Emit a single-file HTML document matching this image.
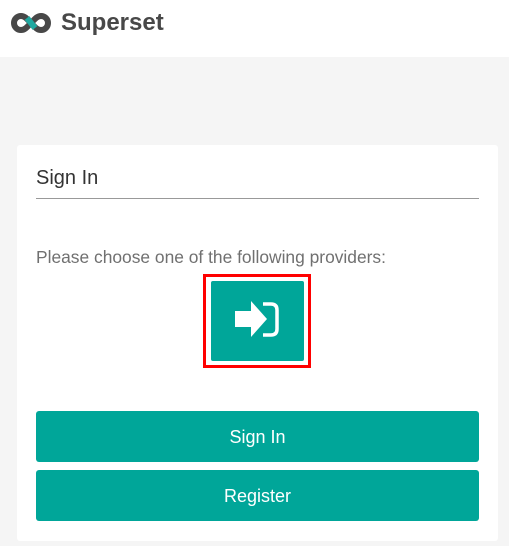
<!DOCTYPE html>
<html><head><style>
body{margin:0;width:509px;height:546px;background:#f5f5f5;font-family:"Liberation Sans",sans-serif;position:relative;overflow:hidden}
.hdr{position:absolute;left:0;top:0;width:509px;height:57px;background:#fff}
.brand{position:absolute;left:61px;top:9px;font-size:24px;font-weight:bold;color:#484848}
.card{position:absolute;left:17px;top:145px;width:481px;height:396px;background:#fff;border-radius:3px}
.t{position:absolute;left:36px;top:167px;font-size:20px;color:#333}
.line{position:absolute;left:36px;top:198px;width:443px;height:1px;background:#999}
.p{position:absolute;left:36px;top:247px;font-size:17.4px;color:#707070}
.red{position:absolute;left:203px;top:274px;width:102px;height:88px;border:3px solid #f00;background:#fff}
.ib{position:absolute;left:5px;top:4px;width:93px;height:80px;background:#00a699;border-radius:2px}
.btn{position:absolute;left:36px;width:443px;height:51px;background:#00a699;border-radius:3px;color:#fff;font-size:18px;text-align:center;line-height:52px}
</style></head><body>
<div class="hdr">
<svg style="position:absolute;left:10px;top:12px" width="42" height="22" viewBox="0 0 42 22">
<path d="M11 4 A7 7 0 1 0 11 18 C15 18 17 15 21 11 C25 7 27 4 31 4 A7 7 0 1 1 31 18 C27 18 25 15 21 11 C17 7 15 4 11 4 Z" fill="none" stroke="#484848" stroke-width="6"/>
<path d="M17 6 L21 11 L25 16" stroke="#1fa8a0" stroke-width="6" fill="none"/>
</svg>
<div class="brand">Superset</div>
</div>
<div class="card"></div>
<div class="t">Sign In</div>
<div class="line"></div>
<div class="p">Please choose one of the following providers:</div>
<div class="red"><div class="ib">
<svg width="93" height="80" viewBox="0 0 93 80">
<path d="M24 30 H40 V20 L56 38 L40 56 V46 H24 Z" fill="#fff"/>
<path d="M52 23 H60 Q66 23 66 29 V48 Q66 54 60 54 H52" fill="none" stroke="#fff" stroke-width="3.5"/>
</svg>
</div></div>
<div class="btn" style="top:411px">Sign In</div>
<div class="btn" style="top:470px">Register</div>
</body></html>
